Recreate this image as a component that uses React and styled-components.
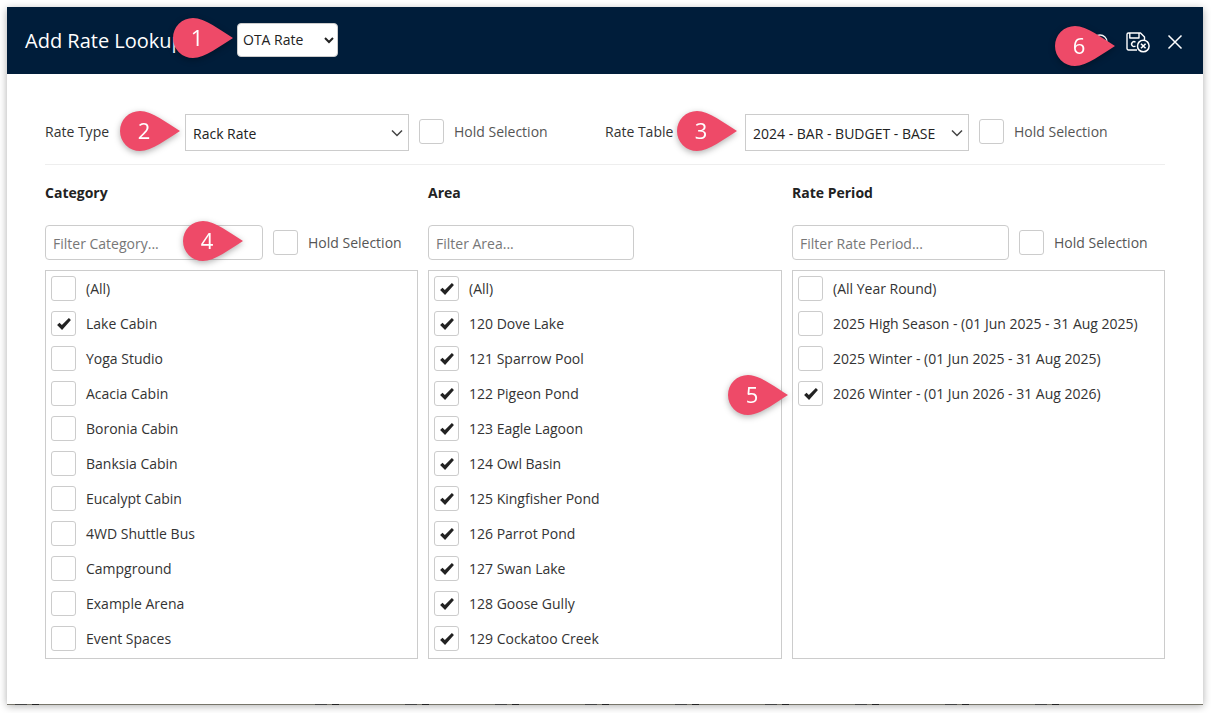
import React from 'react';
import styled, { createGlobalStyle } from 'styled-components';

const categories = [
  { label: '(All)' },
  { label: 'Lake Cabin', checked: true },
  { label: 'Yoga Studio' },
  { label: 'Acacia Cabin' },
  { label: 'Boronia Cabin' },
  { label: 'Banksia Cabin' },
  { label: 'Eucalypt Cabin' },
  { label: '4WD Shuttle Bus' },
  { label: 'Campground' },
  { label: 'Example Arena' },
  { label: 'Event Spaces' },
];

const areas = [
  '(All)',
  '120 Dove Lake',
  '121 Sparrow Pool',
  '122 Pigeon Pond',
  '123 Eagle Lagoon',
  '124 Owl Basin',
  '125 Kingfisher Pond',
  '126 Parrot Pond',
  '127 Swan Lake',
  '128 Goose Gully',
  '129 Cockatoo Creek',
].map((label) => ({ label, checked: true }));

const periods = [
  { label: '(All Year Round)' },
  { label: '2025 High Season - (01 Jun 2025 - 31 Aug 2025)' },
  { label: '2025 Winter - (01 Jun 2025 - 31 Aug 2025)' },
  { label: '2026 Winter - (01 Jun 2026 - 31 Aug 2026)', checked: true },
];

const callouts = [
  { n: 1, x: 173, y: 18 },
  { n: 2, x: 120, y: 111 },
  { n: 3, x: 677, y: 111 },
  { n: 4, x: 183, y: 221 },
  { n: 5, x: 728, y: 375 },
  { n: 6, x: 1055, y: 26 },
];

const hiddenMarks = [0, 1, 2, 3, 4, 5, 6, 7, 8, 9];

function Callout({ n, x, y }) {
  return (
    <Pin $x={x} $y={y}>
      <svg width="60" height="40" viewBox="0 0 60 40">
        <path d="M20 0C32 0 47 12 60 20C47 28 32 40 20 40A20 20 0 0 1 20 0Z" fill="#ee4a68" />
      </svg>
      <PinNumber>{n}</PinNumber>
    </Pin>
  );
}

function Check({ checked }) {
  return (
    <Box>
      {checked && (
        <svg width="14" height="12" viewBox="0 0 15 13">
          <path d="M0 7.500L2.600 5.200L5.200 7.600L12.800 0L15 2.100L5.400 13Z" fill="#222" />
        </svg>
      )}
    </Box>
  );
}

function Column({ title, placeholder, items, filterWidth, hold }) {
  return (
    <div>
      <ColumnTitle>{title}</ColumnTitle>
      <FilterRow>
        <FilterInput placeholder={placeholder} $width={filterWidth} />
        {hold && (
          <>
            <Check />
            <HoldLabel>Hold Selection</HoldLabel>
          </>
        )}
      </FilterRow>
      <List>
        {items.map((item) => (
          <ListRow key={item.label}>
            <Check checked={item.checked} />
            <span>{item.label}</span>
          </ListRow>
        ))}
      </List>
    </div>
  );
}

export default function App() {
  return (
    <Page>
      <GlobalStyle />
      <Modal>
        <Header>
          <Title>Add Rate Lookup</Title>
          <OtaSelect defaultValue="OTA Rate">
            <option>OTA Rate</option>
          </OtaSelect>
          <HeaderIcons>
            <svg width="20" height="20" viewBox="0 0 20 20" fill="none" stroke="#fff" strokeWidth="1.3">
              <circle cx="10" cy="10" r="7" />
            </svg>
            <svg width="24" height="22" viewBox="0 0 24 22" fill="none" stroke="#fff" strokeWidth="1.4" strokeLinejoin="round">
              <path d="M11 19H2.500A1.500 1.500 0 0 1 1 17.500V3.500A1.500 1.500 0 0 1 2.500 2H14.500L18.500 6V9" />
              <path d="M3.800 2V7H13V2" />
              <path d="M9.500 11.200A2.400 2.400 0 1 0 9.500 15" />
              <circle cx="17.300" cy="15" r="5.800" strokeWidth="1.500" />
              <path d="M15 12.700L19.600 17.300M19.600 12.700L15 17.300" strokeWidth="1.600" />
            </svg>
            <svg width="18" height="18" viewBox="0 0 18 18" fill="none" stroke="#fff" strokeWidth="1.500">
              <path d="M2.500 2.500L15.500 15.500M15.500 2.500L2.500 15.500" />
            </svg>
          </HeaderIcons>
        </Header>
        <Body>
          <TopRow>
            <TopGroup>
              <TopLabel>Rate Type</TopLabel>
              <BoxSelect defaultValue="Rack Rate">
                <option>Rack Rate</option>
              </BoxSelect>
              <Check />
              <HoldLabel>Hold Selection</HoldLabel>
            </TopGroup>
            <TopGroup>
              <TopLabel>Rate Table</TopLabel>
              <BoxSelect defaultValue="2024 - BAR - BUDGET - BASE">
                <option>2024 - BAR - BUDGET - BASE</option>
              </BoxSelect>
              <Check />
              <HoldLabel>Hold Selection</HoldLabel>
            </TopGroup>
          </TopRow>
          <Columns>
            <Column title="Category" placeholder="Filter Category..." items={categories} filterWidth={218} hold />
            <Column title="Area" placeholder="Filter Area..." items={areas} filterWidth={206} />
            <Column title="Rate Period" placeholder="Filter Rate Period..." items={periods} filterWidth={217} hold />
          </Columns>
        </Body>
      </Modal>
      <PageEdge>
        {hiddenMarks.map((i) => (
          <EdgeMark key={i} />
        ))}
      </PageEdge>
      {callouts.map((c) => (
        <Callout key={c.n} {...c} />
      ))}
    </Page>
  );
}

const GlobalStyle = createGlobalStyle`
  html, body {
    margin: 0;
    background: #fff;
  }
  * {
    box-sizing: border-box;
  }
`;

const Page = styled.div`
  position: relative;
  width: 1211px;
  height: 713px;
  padding: 7px 8px 9px 7px;
  overflow: hidden;
  font-family: 'Open Sans', sans-serif;
  font-size: 14px;
  color: #333;
`;

const PageEdge = styled.div`
  position: absolute;
  left: 7px;
  right: 8px;
  top: 704px;
  display: flex;
  gap: 66px;
  height: 1px;
  padding-left: 8px;
  background: #77756a;
`;

const EdgeMark = styled.span`
  flex: none;
  width: 24px;
  height: 1px;
  background: linear-gradient(90deg, #444 0 12px, transparent 12px 17px, #222 17px 24px);
  &:first-child {
    margin-right: 210px;
  }
`;

const Modal = styled.div`
  position: relative;
  display: flex;
  flex-direction: column;
  height: 100%;
  background: #fff;
  box-shadow: 0 2px 8px rgba(0, 0, 0, 0.32);
`;

const Header = styled.header`
  display: flex;
  align-items: center;
  height: 67px;
  padding: 0 19px 0 18px;
  background: #001d3a;
`;

const Title = styled.h1`
  width: 212px;
  margin: 0;
  font-size: 20px;
  font-weight: 400;
  color: #fff;
`;

const OtaSelect = styled.select`
  width: 101px;
  height: 34px;
  margin-bottom: 2px;
  padding: 0 1px;
  border: 1px solid #ccc;
  border-radius: 4px;
  background: #fff;
  font-family: inherit;
  font-size: 14px;
  color: #222;
`;

const HeaderIcons = styled.div`
  display: flex;
  align-items: center;
  gap: 16px;
  margin-left: auto;
  margin-top: 2px;
`;

const Body = styled.div`
  padding: 40px 38px 0;
`;

const TopRow = styled.div`
  display: flex;
  height: 51px;
  border-bottom: 1px solid #eee;
`;

const TopGroup = styled.div`
  display: flex;
  align-items: flex-start;
  width: 560px;
`;

const TopLabel = styled.span`
  width: 140px;
  line-height: 36px;
`;

const BoxSelect = styled.select`
  appearance: none;
  width: 224px;
  height: 37px;
  margin-right: 10px;
  padding: 2px 24px 0 7px;
  border: 1px solid #ccc;
  border-radius: 0;
  background: #fff url("data:image/svg+xml,%3Csvg xmlns='http://www.w3.org/2000/svg' width='12' height='8' viewBox='0 0 12 8' fill='none' stroke='%23444' stroke-width='1.5'%3E%3Cpath d='M1 1.500l5 5 5-5'/%3E%3C/svg%3E") no-repeat right 5px center;
  font-family: inherit;
  font-size: 14px;
  color: #222;
`;

const Box = styled.span`
  display: flex;
  flex: none;
  align-items: center;
  justify-content: center;
  width: 25px;
  height: 25px;
  margin-top: 5px;
  border: 1px solid #ccc;
  border-radius: 3px;
  background: #fff;
`;

const HoldLabel = styled.span`
  margin-left: 10px;
  line-height: 35px;
  color: #555;
`;

const Columns = styled.div`
  display: grid;
  grid-template-columns: 373px 354px 373px;
  gap: 10px;
`;

const ColumnTitle = styled.h2`
  margin: 0;
  padding-top: 18px;
  font-size: 14px;
  line-height: 20px;
  font-weight: 700;
  color: #222;
`;

const FilterRow = styled.div`
  display: flex;
  align-items: flex-start;
  height: 45px;
  margin-top: 22px;
`;

const FilterInput = styled.input`
  width: ${(p) => p.$width}px;
  height: 35px;
  margin-right: 10px;
  padding: 2px 7px 0;
  border: 1px solid #ccc;
  border-radius: 4px;
  font-family: inherit;
  font-size: 14px;
  &::placeholder {
    color: #777;
  }
`;

const List = styled.div`
  height: 389px;
  border: 1px solid #ccc;
`;

const ListRow = styled.div`
  display: flex;
  align-items: center;
  gap: 10px;
  height: 35px;
  padding-left: 5px;
  & > span:first-child {
    margin-top: 0;
  }
`;

const Pin = styled.div`
  position: absolute;
  left: ${(p) => p.$x}px;
  top: ${(p) => p.$y}px;
  width: 60px;
  height: 40px;
  filter: drop-shadow(0 2px 3px rgba(0, 0, 0, 0.3));
`;

const PinNumber = styled.span`
  position: absolute;
  left: 0;
  top: 0;
  width: 48px;
  font-size: 22px;
  line-height: 39px;
  text-align: center;
  color: #fff;
`;
